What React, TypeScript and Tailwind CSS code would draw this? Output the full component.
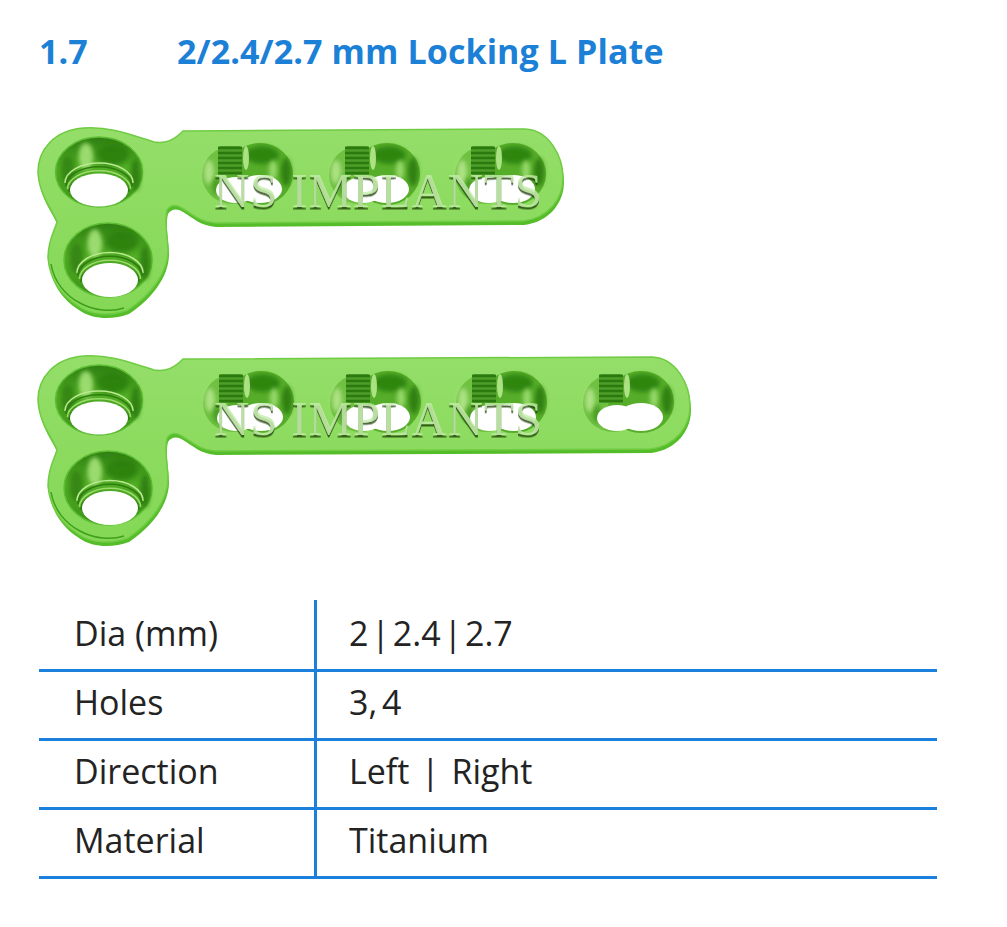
import React from "react";

const rows = [
  { label: "Dia (mm)", value: "2 | 2.4 | 2.7", spacing: "[word-spacing:-6px]", lift: "pb-[3px]" },
  { label: "Holes", value: "3, 4", spacing: "[word-spacing:-4px]", lift: "pb-[7px]" },
  { label: "Direction", value: "Left  |  Right", spacing: "[word-spacing:-3px]", lift: "pb-[7px]" },
  { label: "Material", value: "Titanium", spacing: "", lift: "pb-[7px]" },
];

function Head({ cx, cy, rx, ry, wx, wy, wrx, wry, id }: { cx: number; cy: number; rx: number; ry: number; wx: number; wy: number; wrx: number; wry: number; id: string }) {
  const arc = (dy: number, grow: number) =>
    `M${wx - wrx - grow} ${wy - dy + 4} A${wrx + grow} ${wry + grow * 0.7} 0 0 1 ${wx + wrx + grow} ${wy - dy + 4}`;
  return (
    <g>
      <ellipse cx={cx} cy={cy} rx={rx} ry={ry} fill={`url(#${id})`} stroke="#5fbd36" strokeWidth="1.5" />
      <ellipse cx={cx - rx * 0.3} cy={cy - ry * 0.45} rx={rx * 0.17} ry={ry * 0.38} fill="#a4e278" opacity="0.9" filter="url(#soft)" />
      <ellipse cx={cx - rx * 0.72} cy={cy - ry * 0.05} rx={rx * 0.16} ry={ry * 0.4} fill="#2d7d10" opacity="0.75" filter="url(#soft)" />
      <ellipse cx={cx + rx * 0.32} cy={cy - ry * 0.5} rx={rx * 0.36} ry={ry * 0.3} fill="#2a7f0e" opacity="0.85" filter="url(#soft)" />
      <ellipse cx={cx + rx * 0.84} cy={cy + ry * 0.08} rx={rx * 0.11} ry={ry * 0.45} fill="#2b7a0e" opacity="0.85" filter="url(#soft)" />
      <path d={arc(11, 5)} fill="none" stroke="#b9ea90" strokeWidth="1.6" />
      <path d={arc(8, 4)} fill="none" stroke="#2d7d10" strokeWidth="1.6" />
      <path d={arc(5, 2.5)} fill="none" stroke="#9bdc6d" strokeWidth="1.6" />
      <path d={arc(2, 1)} fill="none" stroke="#2d7d10" strokeWidth="1.6" />
      <ellipse cx={wx} cy={wy} rx={wrx} ry={wry} fill="#ffffff" />
    </g>
  );
}

function BarHole({ x }: { x: number }) {
  const threads = [148, 153, 158, 163, 168, 173];
  return (
    <g>
      <ellipse cx={x + 30} cy={175} rx={30} ry={29} fill="#6fc042" />
      <ellipse cx={x + 58} cy={174} rx={33} ry={31} fill="#57ad2b" />
      <ellipse cx={x + 60} cy={155} rx={17} ry={9} fill="#2b820f" opacity="0.9" filter="url(#soft)" />
      <ellipse cx={x + 84} cy={172} rx={5} ry={14} fill="#2b7a0e" opacity="0.9" filter="url(#soft)" />
      <ellipse cx={x + 71} cy={170} rx={4} ry={10} fill="#a6e47a" opacity="0.8" filter="url(#soft)" />
      <ellipse cx={x + 44} cy={158} rx={3} ry={12} fill="#b6e98e" opacity="0.9" />
      <ellipse cx={x + 7} cy={172} rx={5} ry={12} fill="#b3e58a" opacity="0.9" filter="url(#soft)" />
      <ellipse cx={x + 14} cy={186} rx={4} ry={9} fill="#3a8f17" opacity="0.7" filter="url(#soft)" />
      <rect x={x + 16} y={146} width={24} height={29} rx={3} fill="#4f9e2a" />
      {threads.map((y) => (
        <path key={y} d={`M${x + 16} ${y}h24`} stroke="#2c7a10" strokeWidth="2.6" />
      ))}
      <ellipse cx={x + 34} cy={190} rx={20} ry={13} fill="#ffffff" />
      <ellipse cx={x + 58} cy={189} rx={22} ry={14} fill="#ffffff" />
    </g>
  );
}

function Plate({ holes, end }: { holes: number[]; end: number }) {
  const uid = `p${holes.length}`;
  const d = `M183 131 L${end - 38} 129 C${end - 14} 130 ${end} 156 ${end} 178 C${end} 198 ${end - 14} 218 ${end - 40} 221 L215 223 C200 222 192 214 182 208 C176 204 170 205 167 210 C164 222 168 240 168 250 C168 272 152 294 128 310 C112 316 92 316 78 306 C62 296 50 280 48 258 C48 240 54 232 57 222 C54 212 39 196 38 172 C38 150 54 130 84 128 C110 126 134 136 154 142 C166 144 174 140 183 131 Z`;
  return (
    <svg width="660" height="196" viewBox="39 124 660 196" className="block overflow-visible">
      <defs>
        <filter id="soft" x="-60%" y="-60%" width="220%" height="220%">
          <feGaussianBlur stdDeviation="2" />
        </filter>
        <filter id="tiny" x="-5%" y="-5%" width="110%" height="110%">
          <feGaussianBlur stdDeviation="0.7" />
        </filter>
        <filter id={`${uid}emboss`} x="-5%" y="-20%" width="110%" height="140%">
          <feGaussianBlur in="SourceGraphic" stdDeviation="0.4" result="blurred" />
          <feDropShadow in="blurred" dx="0" dy="2.5" stdDeviation="0.5" floodColor="#123a06" floodOpacity="0.95" />
        </filter>
        <linearGradient id={`${uid}a`} x1="0" y1="0" x2="0" y2="1">
          <stop offset="0" stopColor="#2d7f10" />
          <stop offset="0.45" stopColor="#52ad26" />
          <stop offset="1" stopColor="#3b9216" />
        </linearGradient>
        <linearGradient id={`${uid}b`} x1="0" y1="0" x2="0" y2="1">
          <stop offset="0" stopColor="#94de69" />
          <stop offset="1" stopColor="#84d856" />
        </linearGradient>
      </defs>
      <g filter="url(#tiny)">
        <path d={d} fill="#57bd2a" transform="translate(1 4)" />
        <path d={d} fill={`url(#${uid}b)`} stroke="#6fcc43" strokeWidth="1.5" />
        <path d="M51 264 C54 282 66 296 80 303 C94 311 112 312 124 308" fill="none" stroke="#3f9f1a" strokeWidth="1.5" />
        <Head id={`${uid}a`} cx={99} cy={172} rx={43.5} ry={35} wx={99} wy={190} wrx={29} wry={16.5} />
        <Head id={`${uid}a`} cx={108} cy={260} rx={44} ry={37} wx={110} wy={280} wrx={28} wry={17} />
        {holes.map((x) => (
          <BarHole key={x} x={x} />
        ))}
      </g>
      <text x="214" y="207" fontFamily="'Liberation Serif', serif" fontSize="49" letterSpacing="0.8" fill="#c4edaa" fillOpacity="0.8" filter={`url(#${uid}emboss)`}>
        NS IMPLANTS
      </text>
    </svg>
  );
}

export default function App() {
  return (
    <div className="min-h-[927px] bg-white pl-[39px] pr-[70px] pt-[28px] font-['Open_Sans','Noto_Sans',sans-serif]">
      <h1 className="flex h-[46px] items-center text-[34px] font-bold leading-none tracking-[0.1px] text-[#1b80d6]">
        <span className="w-[138px]">1.7</span>
        <span>2/2.4/2.7 mm Locking L Plate</span>
      </h1>
      <div className="mt-[50px]">
        <Plate holes={[202, 329, 455]} end={563} />
      </div>
      <div className="mt-[32px]">
        <Plate holes={[203, 330, 456, 583]} end={690} />
      </div>
      <div className="mt-[52px] text-[#232323]">
        {rows.map((row, i) => (
          <div key={row.label} className={`grid grid-cols-[278px_1fr] border-b-[3px] border-[#1a80dc] ${i === 0 ? "h-[72px]" : "h-[69px]"}`}>
            <div className={`flex items-center border-r-[3px] border-[#1a80dc] pl-[35px] text-[34px] leading-none ${row.lift}`}>{row.label}</div>
            <div className={`flex items-center whitespace-pre pl-[32px] text-[34px] leading-none ${row.lift} ${row.spacing}`}>{row.value}</div>
          </div>
        ))}
      </div>
    </div>
  );
}
